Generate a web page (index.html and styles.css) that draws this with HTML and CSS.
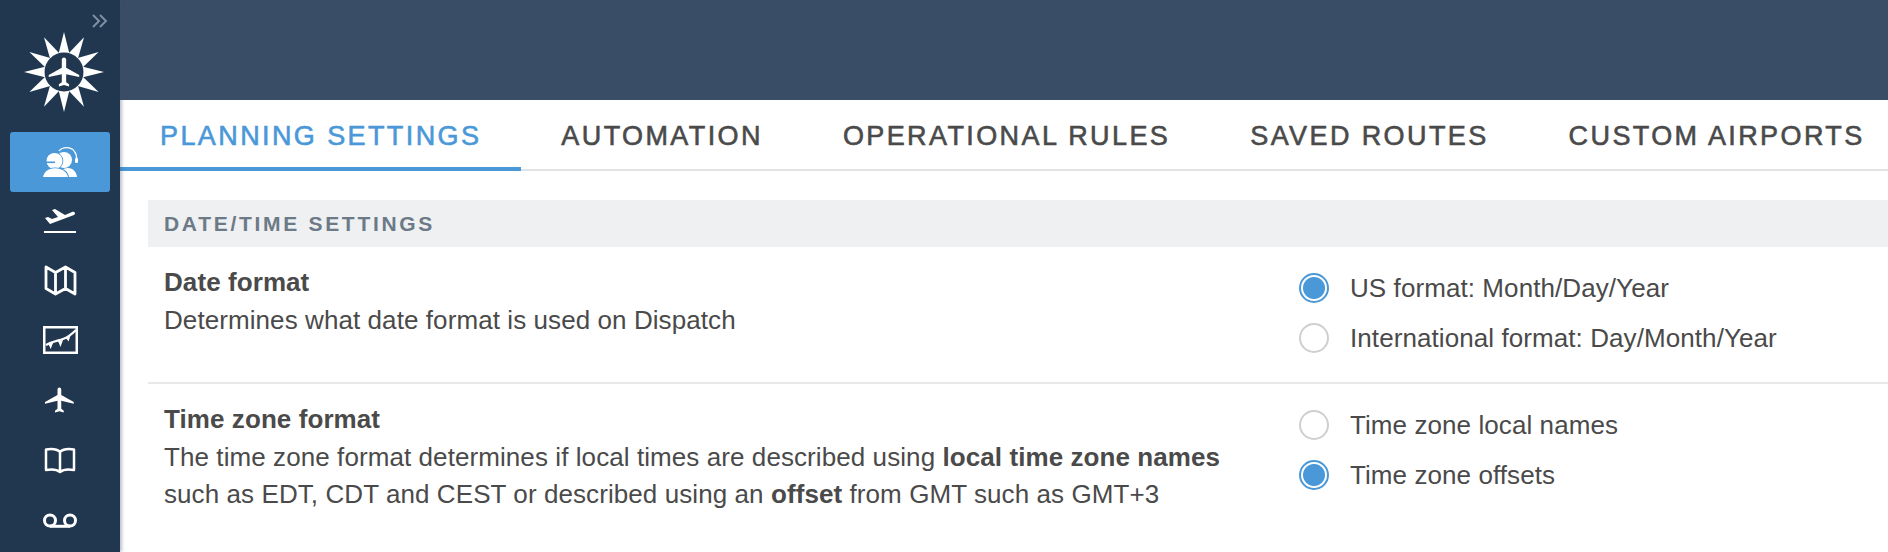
FILE: index.html
```html
<!DOCTYPE html>
<html lang="en">
<head>
  <meta charset="UTF-8" />
  <title>Planning settings</title>
  <link rel="stylesheet" href="styles.css">
</head>
<body>
  <div class="app">
    <aside class="sidebar">
      <div class="brand">
        <svg class="expand" viewBox="0 0 16 14"><path d="M1 1l6 6-6 6M8 1l6 6-6 6"/></svg>
        <svg class="logo" viewBox="-40 -40 80 80">
          <defs><polygon id="ray" points="-5.500,-18 0,-40 5.500,-18"/></defs>
          <use href="#ray"/>
          <use href="#ray" transform="rotate(30)"/>
          <use href="#ray" transform="rotate(60)"/>
          <use href="#ray" transform="rotate(90)"/>
          <use href="#ray" transform="rotate(120)"/>
          <use href="#ray" transform="rotate(150)"/>
          <use href="#ray" transform="rotate(180)"/>
          <use href="#ray" transform="rotate(210)"/>
          <use href="#ray" transform="rotate(240)"/>
          <use href="#ray" transform="rotate(270)"/>
          <use href="#ray" transform="rotate(300)"/>
          <use href="#ray" transform="rotate(330)"/>
          <circle class="logo-disc" r="19.500"/>
          <path transform="translate(-16.700 -17.400) scale(1.450)" d="M22 15.500V14l-9-5V3.500c0-.83-.67-1.500-1.500-1.500S10 2.670 10 3.500V9l-9 5v1.500l9-2V19l-2 1.500V22l3.500-1 3.500 1v-1.500L13 19v-5.500z"/>
        </svg>
      </div>
      <nav class="nav">
        <a class="nav-item active">
          <svg class="ico-crew" viewBox="0 0 35 30">
            <path class="thin" d="M16 4C18 1.500 21 .5 24 .6c6 .2 10 5 9.700 12"/>
            <rect x="32" y="11" width="3" height="5" rx="1.200"/>
            <circle cx="21" cy="13" r="8"/>
            <path d="M16 30c0-5 3-9 9-9 5 0 8.500 4 9 9z"/>
            <circle class="cut" cx="11.500" cy="14" r="8.800"/>
            <circle cx="11.500" cy="14" r="8"/>
            <path class="cut" d="M-1 30c1-6 5-9.500 13-9.500S25 24 26 30z"/>
            <path d="M0 30c1-5 5-8.800 12-8.800S24 25 25 30z"/>
            <rect class="cut" x="3" y="14.500" width="9" height="1.600"/>
          </svg>
        </a>
        <a class="nav-item">
          <svg class="ico-takeoff" viewBox="0 0 32 25">
            <path d="M6 16L1 10l3-1 4 2 6-2-6-7 3-1 10 6 7-3c3-1 4 2 2 3z"/>
            <rect y="23" width="32" height="2.200"/>
          </svg>
        </a>
        <a class="nav-item">
          <svg class="ico-map" viewBox="0 0 33 31"><path d="M2 2l9.500 5.500L21.500 2 31 7.500v21.500l-9.500-5.500L11.500 29 2 23.500zM11.500 7.500V29M21.500 2v21.500"/></svg>
        </a>
        <a class="nav-item">
          <svg class="ico-chart" viewBox="0 0 35 28">
            <rect class="frame" x="1.250" y="1.250" width="32.500" height="25.500"/>
            <path class="trend" d="M3 19C8 16 14 15 20 13 26 11 29 8 33 4"/>
            <path class="marks" d="M5 17l2.700 6 2.700-7zM15 15l2.500 6 2.500-7zM23 12l2.500 3.500L28 8z"/>
          </svg>
        </a>
        <a class="nav-item">
          <svg class="ico-plane" viewBox="0 0 24 24"><path d="M23 15v-1.500L13 8V3.500c0-.83-.67-1.500-1.500-1.500S10 2.670 10 3.500V8L0 13.500V15l10-2.500V19l-2 1.500V22l3.500-1 3.500 1v-1.500L13 19v-6.500z"/></svg>
        </a>
        <a class="nav-item">
          <svg class="ico-book" viewBox="0 0 32 27"><path d="M16 5C13 2 8 1.500 2 2.500V23c6-1 11-.5 14 2 3-2.500 8-3 14-2V2.500C24 1.500 19 2 16 5zM16 5v20"/></svg>
        </a>
        <a class="nav-item">
          <svg class="ico-tape" viewBox="0 0 34 15"><circle cx="7" cy="7.500" r="5.500"/><circle cx="27" cy="7.500" r="5.500"/><path d="M7 13.300h20"/></svg>
        </a>
      </nav>
    </aside>

    <main class="main">
      <div class="topbar"></div>
      <div class="tabs">
        <a class="tab active">Planning settings</a>
        <a class="tab">Automation</a>
        <a class="tab">Operational rules</a>
        <a class="tab">Saved routes</a>
        <a class="tab">Custom airports</a>
      </div>

      <section class="section">
        <h2 class="section-title">Date/time settings</h2>

        <div class="setting">
          <div class="setting-info">
            <h3>Date format</h3>
            <p>Determines what date format is used on Dispatch</p>
          </div>
          <div class="setting-options">
            <label class="radio checked"><span class="dot"></span>US format: Month/Day/Year</label>
            <label class="radio"><span class="dot"></span>International format: Day/Month/Year</label>
          </div>
        </div>

        <div class="setting">
          <div class="setting-info">
            <h3>Time zone format</h3>
            <p>The time zone format determines if local times are described using <b>local time zone names</b> such as EDT, CDT and CEST or described using an <b>offset</b> from GMT such as GMT+3</p>
          </div>
          <div class="setting-options">
            <label class="radio"><span class="dot"></span>Time zone local names</label>
            <label class="radio checked"><span class="dot"></span>Time zone offsets</label>
          </div>
        </div>
      </section>
    </main>
  </div>
</body>
</html>
```

FILE: styles.css
```css
/* page */
html, body {
  height: 100%;
}
body {
  margin: 0;
  overflow: hidden;
  background: #fff;
  color: #4a4a4a;
  font-family: "Liberation Sans", Arial, sans-serif;
  font-size: 26px;
  letter-spacing: 0.08px;
}

.app {
  display: flex;
  height: 552px;
  overflow: hidden;
}

/* sidebar */
.sidebar {
  flex: 0 0 120px;
  background: #21374f;
  box-shadow: 2px 0 3px rgba(60, 80, 110, 0.35);
  position: relative;
  z-index: 1;
}
.brand {
  height: 132px;
  display: flex;
  flex-direction: column;
  align-items: center;
  position: relative;
}
.expand {
  position: absolute;
  top: 14px;
  left: 92px;
  width: 16px;
  height: 14px;
  fill: none;
  stroke: #7f8fa1;
  stroke-width: 2;
}
.logo {
  width: 80px;
  height: 80px;
  margin-top: 32px;
  margin-right: -8px;
  fill: #fff;
}
.logo-disc {
  fill: #21374f;
}
.nav {
  display: flex;
  flex-direction: column;
  align-items: center;
}
.nav-item {
  width: 100px;
  height: 60px;
  display: flex;
  align-items: center;
  justify-content: center;
  border-radius: 3px;
}
.nav-item svg {
  margin-bottom: 4px;
}
.nav-item.active {
  background: #4a98d8;
}
.nav-item.active svg {
  margin-bottom: 0;
}
.ico-crew {
  width: 35px;
  height: 30px;
  fill: #fff;
  overflow: visible;
}
.ico-crew .thin {
  fill: none;
  stroke: #fff;
  stroke-width: 1.2;
}
.ico-crew .cut {
  fill: #4a98d8;
}
.ico-takeoff {
  width: 32px;
  height: 25px;
  fill: #fff;
}
.ico-plane {
  width: 30px;
  height: 30px;
  fill: #fff;
}
.ico-map, .ico-book, .ico-tape {
  fill: none;
  stroke: #fff;
  stroke-linejoin: round;
}
.ico-map {
  width: 33px;
  height: 31px;
  stroke-width: 2.800;
}
.ico-book {
  width: 32px;
  height: 27px;
  stroke-width: 2.500;
}
.ico-tape {
  width: 34px;
  height: 15px;
  stroke-width: 3;
}
.ico-chart {
  width: 35px;
  height: 28px;
}
.ico-chart .frame {
  fill: none;
  stroke: #fff;
  stroke-width: 2.500;
}
.ico-chart .trend {
  fill: none;
  stroke: #fff;
  stroke-width: 2.200;
}
.ico-chart .marks {
  fill: #fff;
}

/* main */
.main {
  flex: 1;
  min-width: 0;
}
.topbar {
  height: 100px;
  background: #3a4d66;
}
.tabs {
  display: flex;
  height: 71px;
  box-sizing: border-box;
  border-bottom: 2px solid #e3e3e3;
}
.tab {
  padding: 6px 40px 0;
  height: 71px;
  box-sizing: border-box;
  display: flex;
  align-items: center;
  border-bottom: 4px solid transparent;
  font-size: 27px;
  letter-spacing: 2.400px;
  -webkit-text-stroke: 0.6px currentColor;
  text-transform: uppercase;
  white-space: nowrap;
  color: #4a4a4a;
}
.tab.active {
  color: #4a98d8;
  border-bottom-color: #4a98d8;
}

/* settings */
.section {
  margin: 29px 0 0 28px;
}
.section-title {
  margin: 0;
  height: 47px;
  line-height: 47px;
  padding-left: 16px;
  background: #eff0f2;
  color: #6c7a87;
  font-size: 21px;
  font-weight: 700;
  letter-spacing: 2.700px;
  text-transform: uppercase;
}
.setting {
  display: flex;
  box-sizing: border-box;
  height: 137px;
  padding: 16px 0 0 16px;
  border-bottom: 2px solid #e8e8e8;
}
.setting:last-child {
  border-bottom: none;
}
.setting-info {
  width: 1095px;
  padding-right: 40px;
  flex: none;
}
.setting-info h3 {
  margin: 0;
  font-size: 26px;
  line-height: 38px;
  font-weight: 700;
}
.setting-info p {
  margin: 1px 0 0;
  line-height: 37px;
}
.setting-options {
  display: flex;
  flex-direction: column;
  gap: 20px;
  padding-top: 10px;
}
.radio {
  display: flex;
  align-items: center;
  gap: 21px;
  height: 30px;
  white-space: nowrap;
}
.dot {
  width: 30px;
  height: 30px;
  box-sizing: border-box;
  border-radius: 50%;
  border: 2px solid #cfcfcf;
  background: #fff;
}
.radio.checked .dot {
  border-color: #4a98d8;
  background: radial-gradient(circle, #4a98d8 0 10.500px, #fff 11.500px);
}
```
